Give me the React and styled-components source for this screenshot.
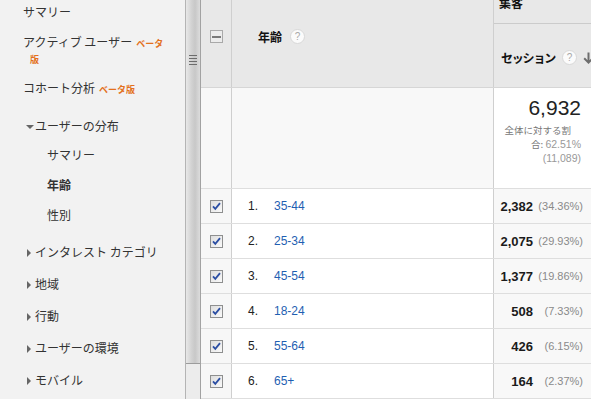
import React from 'react'
import styled, { createGlobalStyle } from 'styled-components'

const GlobalStyle = createGlobalStyle`
    html, body {
        margin: 0;
        padding: 0;
    }
    body {
        width: 591px;
        height: 399px;
        overflow: hidden;
        background: #fff;
        font-family: "Liberation Sans", "Noto Sans CJK JP", sans-serif;
    }
`

const jp = `"Noto Sans CJK JP", "Liberation Sans", sans-serif`

const Page = styled.div`
    display: flex;
    height: 399px;
    overflow: hidden;
`

/* ---------- sidebar ---------- */

const Sidebar = styled.aside`
    width: 185px;
    flex-shrink: 0;
    background: #f2f2f2;
    font-family: ${jp};
    font-size: 12px;
    color: #333;
    overflow: hidden;
`
const Nav = styled.ul`
    list-style: none;
    margin: -3px 0 0;
    padding: 0;
`
const Item = styled.li`
    line-height: 16px;
    padding: ${(p) => (p.$group ? '8px 0' : '7px 0')};
    padding-left: ${(p) => (p.$sub ? 47 : p.$group ? 26 : 23)}px;
    margin-top: ${(p) => p.$gap || 0}px;
    font-weight: ${(p) => (p.$active ? 700 : 400)};
    white-space: nowrap;
`
const HangItem = styled(Item)`
    padding-left: 30px;
    text-indent: -7px;
`
const SubList = styled.ul`
    list-style: none;
    margin: -2px 0 6px;
    padding: 0;
`
const Badge = styled.span`
    color: #e3711d;
    font-size: 9px;
    line-height: 1;
    font-weight: 700;
    margin-left: ${(p) => (p.$tight ? 0 : 4)}px;
`
const Caret = styled.span`
    display: inline-block;
    width: 9px;
    height: 8px;
    vertical-align: 0;
    position: relative;
    &::before {
        content: '';
        position: absolute;
        ${(p) =>
            p.$open
                ? `left: 0; top: 2px;
                   border-left: 4px solid transparent;
                   border-right: 4px solid transparent;
                   border-top: 4px solid #666;`
                : `left: 1px; top: 0;
                   border-top: 4px solid transparent;
                   border-bottom: 4px solid transparent;
                   border-left: 4px solid #666;`}
    }
`

const Splitter = styled.div`
    width: 16px;
    flex-shrink: 0;
    box-sizing: border-box;
    border-left: 1px solid #b4b4b4;
    border-right: 1px solid #a2a2a2;
    background: #ececec;
`
const Thumb = styled.div`
    height: 364px;
    box-sizing: border-box;
    border-bottom: 1px solid #9c9c9c;
    background: linear-gradient(to right, #e8e8e8 0%, #d2d2d2 40%, #c8c8c8 65%, #dcdcdc 100%);
    display: flex;
    justify-content: center;
    padding-top: 55px;
`

/* ---------- table ---------- */

const Table = styled.section`
    flex: 1;
    display: flex;
    flex-direction: column;
    font-family: "Liberation Sans", Arial, sans-serif;
    color: #222;
`
const Row = styled.div`
    display: grid;
    grid-template-columns: 31px 262px 1fr;
    height: ${(p) => p.$h}px;
    flex-shrink: 0;
    box-sizing: border-box;
    border-bottom: 1px solid ${(p) => p.$line || '#dedede'};
    background: ${(p) => p.$bg || '#fff'};
`
const Cell = styled.div`
    box-sizing: border-box;
    min-width: 0;
    border-right: ${(p) => (p.$last ? 'none' : '1px solid #cfcfcf')};
    background: ${(p) => p.$bg || 'transparent'};
    display: flex;
    align-items: ${(p) => p.$align || 'center'};
    justify-content: ${(p) => p.$justify || 'flex-start'};
    padding: ${(p) => p.$pad || '0'};
`
const HeadLabel = styled.span`
    font-family: ${jp};
    font-size: 12px;
    font-weight: 700;
    color: #111;
    line-height: 16px;
    white-space: nowrap;
    letter-spacing: ${(p) => p.$tight || 0}px;
`
const Help = styled.span`
    display: inline-flex;
    flex-shrink: 0;
    align-items: center;
    justify-content: center;
    width: 13px;
    height: 13px;
    border-radius: 50%;
    background: #fbfbfb;
    border: 1px solid #d8d8d8;
    color: #a8a8a8;
    font-size: 10px;
    font-family: "Liberation Sans", sans-serif;
    margin-left: ${(p) => p.$ml || 8}px;
`
const MinusBox = styled.span`
    width: 13px;
    height: 13px;
    box-sizing: border-box;
    border: 1px solid #a9a9a9;
    background: #ececec;
    display: flex;
    align-items: center;
    justify-content: center;
    &::after {
        content: '';
        width: 9px;
        height: 2px;
        background: #7a7a7a;
    }
`
const SessionHead = styled.div`
    display: flex;
    flex-direction: column;
    width: 100%;
`
const Group = styled.div`
    height: 24px;
    box-sizing: border-box;
    border-bottom: 1px solid #cbcbcb;
    padding-left: 5px;
    overflow: hidden;
    & > span {
        display: block;
        margin-top: -5px;
    }
`
const Metric = styled.div`
    flex: 1;
    display: flex;
    align-items: center;
    padding: 4px 0 0 7px;
    white-space: nowrap;
`
const Summary = styled.div`
    text-align: right;
    padding: 8px 10px 0 0;
    width: 100%;
    box-sizing: border-box;
`
const Total = styled.div`
    font-size: 21px;
    line-height: 24px;
    color: #222;
    margin-bottom: 3px;
`
const Note = styled.div`
    font-size: 10.5px;
    line-height: 14px;
    color: ${(p) => p.$c || '#999'};
    white-space: nowrap;
    padding-right: ${(p) => p.$pr || 0}px;
`
const Kana = styled.span`
    font-family: ${jp};
    font-size: 9.5px;
    color: #777;
`
const Num = styled.span`
    width: 26px;
    font-size: 12px;
    padding-left: 16px;
`
const Label = styled.span`
    font-size: 12px;
    color: #1f5fb2;
`
const Value = styled.span`
    font-size: 13px;
    font-weight: 700;
    color: #1b1b1b;
`
const Pct = styled.span`
    width: 46px;
    margin-left: 4px;
    text-align: right;
    font-size: 11px;
    color: #8a8a8a;
`

const Handle = () => (
    <svg width="8" height="10" viewBox="0 0 8 10">
        {[0.5, 3.5, 6.5, 9.5].map((y) => (
            <line key={y} x1="0" x2="8" y1={y} y2={y} stroke="#6c6c6c" strokeWidth="1" />
        ))}
    </svg>
)

const Check = () => (
    <svg width="13" height="13" viewBox="0 0 13 13">
        <defs>
            <linearGradient id="cb" x1="0" y1="0" x2="1" y2="1">
                <stop offset="0" stopColor="#dcdcdc" />
                <stop offset="1" stopColor="#fbfbfb" />
            </linearGradient>
        </defs>
        <rect x="0.5" y="0.5" width="12" height="12" fill="url(#cb)" stroke="#8e8f8f" />
        <path d="M3 6.3 L5.3 8.8 L10 3.2" fill="none" stroke="#2b4ea3" strokeWidth="1.8" />
    </svg>
)

const SortDown = () => (
    <svg width="11" height="12" viewBox="0 0 11 12" style={{ marginLeft: 6, flexShrink: 0 }}>
        <path d="M5.5 0.5 V10.5 M1.2 6.3 L5.5 10.6 L9.8 6.3" fill="none" stroke="#6d6d6d" strokeWidth="2" />
    </svg>
)

const rows = [
    ['35-44', '2,382', '(34.36%)'],
    ['25-34', '2,075', '(29.93%)'],
    ['45-54', '1,377', '(19.86%)'],
    ['18-24', '508', '(7.33%)'],
    ['55-64', '426', '(6.15%)'],
    ['65+', '164', '(2.37%)'],
]

const App = () => {
    return (
        <Page>
            <GlobalStyle />
            <Sidebar>
                <Nav>
                    <Item>サマリー</Item>
                    <HangItem>
                        アクティブ ユーザー<Badge>ベータ</Badge>
                        <br />
                        <Badge $tight>版</Badge>
                    </HangItem>
                    <Item>
                        コホート分析<Badge>ベータ版</Badge>
                    </Item>
                    <Item $group $gap={7} style={{ paddingBottom: 8 }}>
                        <Caret $open />
                        ユーザーの分布
                    </Item>
                    <SubList>
                        <Item $sub>サマリー</Item>
                        <Item $sub $active>年齢</Item>
                        <Item $sub>性別</Item>
                    </SubList>
                    <Item $group>
                        <Caret />
                        インタレスト カテゴリ
                    </Item>
                    <Item $group>
                        <Caret />
                        地域
                    </Item>
                    <Item $group>
                        <Caret />
                        行動
                    </Item>
                    <Item $group>
                        <Caret />
                        ユーザーの環境
                    </Item>
                    <Item $group>
                        <Caret />
                        モバイル
                    </Item>
                </Nav>
            </Sidebar>
            <Splitter>
                <Thumb>
                    <Handle />
                </Thumb>
            </Splitter>
            <Table>
                <Row $h={88} $bg="#e8e8e8" $line="#d6d6d6">
                    <Cell $align="flex-start" $justify="center" $pad="30px 0 0">
                        <MinusBox />
                    </Cell>
                    <Cell $align="flex-start" $pad="29px 0 0 26px">
                        <HeadLabel>年齢</HeadLabel>
                        <Help $ml={8}>?</Help>
                    </Cell>
                    <Cell $last $align="stretch">
                        <SessionHead>
                            <Group>
                                <HeadLabel>集客</HeadLabel>
                            </Group>
                            <Metric>
                                <HeadLabel $tight={-1.2}>セッション</HeadLabel>
                                <Help $ml={7}>?</Help>
                                <SortDown />
                            </Metric>
                        </SessionHead>
                    </Cell>
                </Row>
                <Row $h={101} $bg="#f8f8f8">
                    <Cell />
                    <Cell />
                    <Cell $last $bg="#fff" $align="flex-start">
                        <Summary>
                            <Total>6,932</Total>
                            <Note $pr={10}>
                                <Kana>全体に対する割</Kana>
                            </Note>
                            <Note>
                                <Kana>合: </Kana>62.51%
                            </Note>
                            <Note>(11,089)</Note>
                        </Summary>
                    </Cell>
                </Row>
                {rows.map(([label, value, pct], i) => (
                    <Row key={label} $h={35}>
                        <Cell $bg="#f7f7f7" $justify="center">
                            <Check />
                        </Cell>
                        <Cell>
                            <Num>{i + 1}.</Num>
                            <Label>{label}</Label>
                        </Cell>
                        <Cell $last $bg="#f8f8f8" $justify="flex-end" $pad="0 8px 0 0">
                            <Value>{value}</Value>
                            <Pct>{pct}</Pct>
                        </Cell>
                    </Row>
                ))}
            </Table>
        </Page>
    )
}

export default App
